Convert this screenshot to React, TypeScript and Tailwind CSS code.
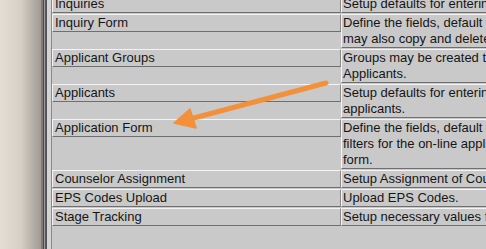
import React from "react";

interface SetupRow {
  name: string;
  lines: string[];
}

const rows: SetupRow[] = [
  { name: "Inquiries", lines: ["Setup defaults for entering inquiries."] },
  {
    name: "Inquiry Form",
    lines: [
      "Define the fields, default values and display options for the inquiry form. You",
      "may also copy and delete inquiry forms.",
    ],
  },
  {
    name: "Applicant Groups",
    lines: ["Groups may be created to organize and filter", "Applicants."],
  },
  {
    name: "Applicants",
    lines: ["Setup defaults for entering and maintaining", "applicants."],
  },
  {
    name: "Application Form",
    lines: [
      "Define the fields, default values and",
      "filters for the on-line application",
      "form.",
    ],
  },
  { name: "Counselor Assignment", lines: ["Setup Assignment of Counselors."] },
  { name: "EPS Codes Upload", lines: ["Upload EPS Codes."] },
  { name: "Stage Tracking", lines: ["Setup necessary values for Stage Tracking."] },
];

function Row({ row }: { row: SetupRow }) {
  return (
    <div className="flex mb-px">
      {/* name cell, one line tall like a button */}
      <div className="w-[289px] shrink-0 self-start h-[18px] border-t border-l border-t-[#f4f4f4] border-l-[#f4f4f4] border-b border-r border-b-[#6f6f6f] border-r-[#8a8a8a] bg-[#c9c9c9] pl-[2px] leading-[16px] whitespace-nowrap overflow-hidden">
        {row.name}
      </div>
      <div className="flex-1 min-w-0 border-t border-l border-t-[#f4f4f4] border-l-[#f4f4f4] border-b border-b-[#6f6f6f] bg-[#c9c9c9] pl-px overflow-hidden">
        {row.lines.map((l, i) => (
          <div key={i} className="leading-[16px] whitespace-nowrap">
            {l}
          </div>
        ))}
      </div>
    </div>
  );
}

export default function App() {
  return (
    <div
      className="relative w-[486px] h-[249px] overflow-hidden flex bg-[#c9c9c9] text-[13px] text-[#151515]"
      style={{ fontFamily: '"Liberation Sans", Arial, sans-serif' }}
    >
      {/* desktop behind the window */}
      <div className="w-[41px] shrink-0 bg-gradient-to-r from-[#e3ded5] via-[#d6d0c6] to-[#a09b94]" />
      {/* window frame */}
      <div className="w-[2px] shrink-0 bg-[#7c7b79]" />
      <div className="w-px shrink-0 bg-[#4a4a4a]" />
      <div className="w-px shrink-0 bg-[#9c9c9c]" />
      <div className="w-[2px] shrink-0 bg-[#565656]" />
      <div className="w-[4px] shrink-0 bg-[#d3d3d3]" />
      {/* table */}
      <div className="flex-1 min-w-0 border-l border-l-[#8a8a8a] bg-[#c9c9c9]">
        <div className="-mt-[5px] flex flex-col">
          {rows.map((r) => (
            <Row key={r.name} row={r} />
          ))}
        </div>
      </div>

      {/* annotation arrow drawn over the screenshot */}
      <svg
        className="absolute left-0 top-0 pointer-events-none"
        width="486"
        height="249"
        viewBox="0 0 486 249"
      >
        <line
          x1="326"
          y1="83"
          x2="190"
          y2="119"
          stroke="#f3913a"
          strokeWidth="5"
          strokeLinecap="round"
        />
        <polygon points="174,123 190,109 196,128" fill="#f3913a" stroke="#f3913a" strokeWidth="1.5" strokeLinejoin="round" />
      </svg>
    </div>
  );
}
